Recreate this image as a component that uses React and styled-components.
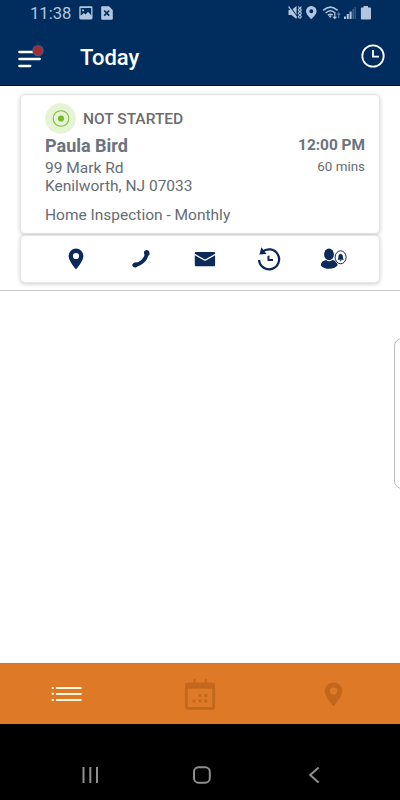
import React from 'react';
import styled, { createGlobalStyle } from 'styled-components';

const Global = createGlobalStyle`
  * { box-sizing: border-box; }
  body { margin: 0; background: #fff; font-family: Roboto, "Liberation Sans", sans-serif; }
  svg { display: block; flex: none; }
`;

const Screen = styled.div`
  position: relative;
  display: flex;
  flex-direction: column;
  width: 400px;
  height: 800px;
  overflow: hidden;
  background: #fff;
`;

const TopArea = styled.header`
  height: 86px;
  flex: none;
  background: #002d5e;
  border-bottom: 1px solid #00093f;
`;

const StatusBar = styled.div`
  display: flex;
  align-items: center;
  height: 26px;
  padding: 0 28px 0 30px;
  color: #b4c6df;
`;

const StatusTime = styled.span`
  width: 49px;
  padding-top: 1px;
  font-size: 16.6px;
  line-height: 26px;
  white-space: nowrap;
`;

const Notifications = styled.div`
  display: flex;
  flex: 1;
  gap: 8px;
`;

const AppBar = styled.div`
  display: flex;
  align-items: center;
  height: 60px;
  padding: 0 15px 0 18px;
`;

const Title = styled.h1`
  flex: 1;
  margin: 4px 0 0 36px;
  color: #fff;
  font-size: 22px;
  font-weight: 500;
  line-height: 28px;
`;

const Content = styled.main`
  flex: none;
  height: 205px;
  padding: 8px 20px 0;
  border-bottom: 1px solid #c9c9c9;
`;

const Card = styled.section`
  height: ${(p) => p.$height}px;
  margin-bottom: 1px;
  border: 1px solid #e6e6e6;
  border-radius: 5px;
  background: #fff;
  box-shadow: 0 1px 4px rgba(0, 0, 0, 0.2);
`;

const Details = styled(Card)`
  display: flex;
  flex-direction: column;
  padding: 8px 14px 0 24px;
`;

const Status = styled.div`
  display: flex;
  align-items: center;
  gap: 7px;
  height: 31px;
  color: #6c6c6c;
  font-size: 15.5px;
  font-weight: 500;
`;

const Row = styled.div`
  display: flex;
  justify-content: space-between;
  height: ${(p) => p.$height}px;
  line-height: ${(p) => p.$height}px;
  white-space: nowrap;
`;

const Name = styled.strong`
  color: #6b737e;
  font-size: 18px;
  font-weight: 700;
`;

const Time = styled.strong`
  color: #6b737e;
  font-size: 15.4px;
  font-weight: 700;
  line-height: 22px;
`;

const Text = styled.span`
  color: #666c73;
  font-size: 15.5px;
`;

const Duration = styled.span`
  color: #666c73;
  font-size: 13.4px;
  line-height: 18px;
`;

const Service = styled(Row)`
  margin-top: 10px;
`;

const Actions = styled(Card)`
  display: grid;
  grid-template-columns: repeat(5, 64.4px);
  justify-content: center;
  align-items: center;
  padding-left: 10px;
`;

const Action = styled.button`
  display: flex;
  justify-content: center;
  padding: 0;
  border: 0;
  background: none;
  color: #0a2a5c;
`;

const EdgePanel = styled.div`
  position: absolute;
  top: 338px;
  right: -12px;
  width: 18px;
  height: 151px;
  border: 1px solid #bdbdbd;
  border-radius: 8px;
`;

const TabBar = styled.nav`
  display: grid;
  grid-template-columns: repeat(3, 1fr);
  align-items: center;
  justify-items: center;
  height: 61px;
  flex: none;
  margin-top: auto;
  border-top: 1px solid #c77c33;
  background: #de7a27;
  color: #c1681c;
`;

const SystemNav = styled.nav`
  display: flex;
  align-items: center;
  gap: 95px;
  height: 76px;
  flex: none;
  padding: 26px 0 0 81px;
  background: #000;
  color: #8f8f8f;
`;

const PictureIcon = () => (
  <svg width="14" height="14" viewBox="0 0 14 14">
    <rect x=".3" y=".3" width="13.2" height="13.2" rx="1.4" fill="currentColor" />
    <path d="M1.7 2h10.5v7.2L9 5.8 6.7 8.5 4.8 6.9 1.7 9.8z" fill="#002d5e" />
    <circle cx="4" cy="4.3" r="1.1" fill="currentColor" />
  </svg>
);

const FileIcon = () => (
  <svg width="12" height="14" viewBox="0 0 12 14">
    <path d="M1.4.3H8l3.8 4v8.2q0 1.2-1.2 1.2H1.4Q.2 13.7.2 12.5v-11Q.2.3 1.4.3z" fill="currentColor" />
    <path d="M3.2 4.5l5 5.2m0-5.2l-5 5.2" stroke="#002d5e" strokeWidth="1.7" />
  </svg>
);

const StatusIcons = () => (
  <svg width="86" height="16" viewBox="286 5 86 16" fill="currentColor">
    <path d="M288.5 10h3l5-4v13l-5-4h-3z" />
    <path d="M289.6 6l8.4 11.5" stroke="#002d5e" strokeWidth="1.1" />
    <path d="M288.6 6.7l8 11" stroke="currentColor" strokeWidth="1.3" />
    <path d="M298.3 6.5l1.3 1.7-1.3 1.7 1.3 1.7-1.3 1.7 1.3 1.7-1.3 1.7 1.3 1.7M301.3 6.5l-1 1.7 1 1.7-1 1.7 1 1.7-1 1.7 1 1.7-1 1.7" fill="none" stroke="currentColor" strokeWidth="1.1" />
    <path fillRule="evenodd" d="M311.3 6a5.3 5.3 0 0 0-5.3 5.3c0 3.3 5.3 7.9 5.3 7.9s5.3-4.6 5.3-7.9A5.3 5.3 0 0 0 311.3 6zm0 3.2a2 2 0 1 1 0 4 2 2 0 0 1 0-4z" />
    <g fill="none" stroke="currentColor" strokeWidth="1.6">
      <path d="M323.2 10.4q7.2-6.7 14.4 0M325.6 13q4.8-4.5 9.6 0M328 15.4q2.4-2.2 4.6-.2" />
    </g>
    <path d="M328.8 16.2l1.4-1 1.4 1-1.4 1.7zM334.2 12.8v4h-1.8l2.4 2.4 2.4-2.4h-1.8v-4z" />
    <path opacity=".5" d="M338.7 12l2.2 2.7h-1.6V18h-1.2v-3.3h-1.6z" />
    <path d="M344 16.5h2V19h-2zM346.8 14h2v5h-2zM349.6 11.5h2V19h-2z" />
    <path opacity=".35" d="M352.4 9h1.6v10h-1.6zM354.6 7h1.2v12h-1.2z" />
    <path d="M363.5 6h4.5v1.5h2.2q.8 0 .8.8v10.2q0 .9-.9.9h-8.3q-.9 0-.9-.9V8.3q0-.8.8-.8h1.8z" />
  </svg>
);

const MenuIcon = () => (
  <svg width="26" height="26" viewBox="18 44 26 26">
    <path d="M19.3 53h14M19.3 60h20.5M19.3 67h11" stroke="#fff" strokeWidth="2.3" strokeLinecap="round" />
    <circle cx="38" cy="51.6" r="5.1" fill="#a62b31" stroke="#47577f" strokeWidth="1.2" />
  </svg>
);

const ClockIcon = () => (
  <svg width="24" height="24" viewBox="0 0 24 24" fill="none" stroke="#fff" strokeWidth="1.8">
    <circle cx="12" cy="12" r="10.7" />
    <path d="M12 6v6.7h6" />
  </svg>
);

const TargetIcon = () => (
  <svg width="31" height="31" viewBox="0 0 31 31">
    <circle cx="15.5" cy="15.5" r="15.3" fill="#e6f3d5" />
    <circle cx="16" cy="15.5" r="7.8" fill="none" stroke="#83bd3b" strokeWidth="1.1" />
    <circle cx="16" cy="15.5" r="3.1" fill="#78ba2d" />
  </svg>
);

const PinIcon = ({ width, height }) => (
  <svg width={width} height={height} viewBox="0 0 16 22" preserveAspectRatio="none">
    <path fill="currentColor" fillRule="evenodd" d="M8 .5A7.4 7.4 0 0 0 .6 7.9C.6 13.3 8 21.3 8 21.3s7.4-8 7.4-13.4A7.4 7.4 0 0 0 8 .5zm0 4.4a3.1 3.1 0 1 1 0 6.2 3.1 3.1 0 0 1 0-6.2z" />
  </svg>
);

const PhoneIcon = () => (
  <svg width="20" height="20" viewBox="0 0 20 20">
    <path d="M3.5 15.6C9.3 16 15.3 10.7 15.8 4.2" fill="none" stroke="currentColor" strokeWidth="3.7" />
    <path d="M1.2 15.7q1.5-2.8 4.2-2l1.8 1.4q.2 2.8-2.8 3.3-3 .2-3.2-2.7zM13.3 2.3q2-2.1 4.3-.5 1.5 1.5.8 4l-1.8 1.5-3.2-1.8q-.8-1.7-.1-3.2z" fill="currentColor" />
  </svg>
);

const MailIcon = () => (
  <svg width="22" height="16" viewBox="0 0 22 16">
    <rect x=".8" y="1" width="20.3" height="14.2" rx="1" fill="currentColor" />
    <path d="M.6 3.4L11 9.3l10.4-5.9" fill="none" stroke="#fff" strokeWidth="1.3" />
  </svg>
);

const HistoryIcon = () => (
  <svg width="24" height="24" viewBox="0 0 24 24">
    <path d="M5.4 4.9A10 10 0 1 1 2.1 13" fill="none" stroke="currentColor" strokeWidth="2.3" />
    <path d="M4.4.3L2.4 7.5 9.5 7z" fill="currentColor" />
    <path d="M11.5 8.8v4.3H16" fill="none" stroke="currentColor" strokeWidth="2" />
  </svg>
);

const CustomerIcon = () => (
  <svg width="27" height="22" viewBox="0 0 27 22">
    <ellipse cx="9" cy="6.4" rx="4.9" ry="5.8" fill="currentColor" />
    <path d="M.8 17.7q0-5 5.4-5.8Q9 14.5 12.3 12q5.3.8 5.3 5.2-2.8 3.6-8.3 3.6T.8 17.7z" fill="currentColor" />
    <ellipse cx="20.6" cy="9.3" rx="6.4" ry="7.3" fill="#fff" />
    <ellipse cx="20.6" cy="9.3" rx="5.5" ry="6.5" fill="none" stroke="currentColor" strokeWidth="1" />
    <path d="M17.3 11.7q1.1-.7 1.1-3 .1-2.5 2.2-3 2.2.5 2.3 3 0 2.3 1.1 3zM19.5 12.3h2.2q-.4 1.1-1.1 1.1t-1.1-1.1z" fill="currentColor" />
  </svg>
);

const ListIcon = () => (
  <svg width="31" height="16" viewBox="0 0 31 16" stroke="#fff8dc" strokeWidth="2">
    <path d="M.8 2h2M.8 7.8h2M.8 14h2M5 2h25.5M5 8h25.5M5 14h25.5" />
  </svg>
);

const CalendarIcon = () => (
  <svg width="32" height="34" viewBox="0 0 32 34" fill="none" stroke="currentColor">
    <rect x="2.3" y="6.8" width="27.4" height="24.6" rx="2" strokeWidth="2.8" />
    <path d="M1.5 8.8h29" strokeWidth="5.6" />
    <path d="M10.5 2v5M21.8 2v5" strokeWidth="1.7" />
    <path d="M14.5 18.7h3M20.2 18.7h3M8.5 24h3M14.5 24h3M20.2 24h3" strokeWidth="2.8" />
  </svg>
);

const RecentsIcon = () => (
  <svg width="18" height="18" viewBox="0 0 18 18" stroke="currentColor" strokeWidth="2">
    <path d="M2.5 1v16M9.3 1v16M16 1v16" />
  </svg>
);

const HomeIcon = () => (
  <svg width="19" height="18" viewBox="0 0 19 18" fill="none" stroke="currentColor" strokeWidth="2">
    <rect x="1" y="1.3" width="15.8" height="15.4" rx="4.5" />
  </svg>
);

const BackIcon = () => (
  <svg width="12" height="18" viewBox="0 0 12 18" fill="none" stroke="currentColor" strokeWidth="2">
    <path d="M10.6 1.5L2.2 9l8.4 7.5" />
  </svg>
);

const HomeButton = styled.span`
  margin-left: -1px;
  margin-right: 1px;
`;

export default function App() {
  return (
    <>
      <Global />
      <Screen>
        <TopArea>
          <StatusBar>
            <StatusTime>11:38</StatusTime>
            <Notifications>
              <PictureIcon />
              <FileIcon />
            </Notifications>
            <StatusIcons />
          </StatusBar>
          <AppBar>
            <MenuIcon />
            <Title>Today</Title>
            <ClockIcon />
          </AppBar>
        </TopArea>
        <Content>
          <Details $height={140}>
            <Status><TargetIcon />NOT STARTED</Status>
            <Row $height={24}><Name>Paula Bird</Name><Time>12:00 PM</Time></Row>
            <Row $height={20}><Text>99 Mark Rd</Text><Duration>60 mins</Duration></Row>
            <Row $height={17}><Text>Kenilworth, NJ 07033</Text></Row>
            <Service $height={20}><Text>Home Inspection - Monthly</Text></Service>
          </Details>
          <Actions $height={48}>
            <Action aria-label="Location"><PinIcon width={16} height={22} /></Action>
            <Action aria-label="Call"><PhoneIcon /></Action>
            <Action aria-label="Email"><MailIcon /></Action>
            <Action aria-label="History"><HistoryIcon /></Action>
            <Action aria-label="Customer alerts"><CustomerIcon /></Action>
          </Actions>
        </Content>
        <EdgePanel />
        <TabBar>
          <ListIcon />
          <CalendarIcon />
          <PinIcon width={19} height={25} />
        </TabBar>
        <SystemNav>
          <RecentsIcon />
          <HomeButton><HomeIcon /></HomeButton>
          <BackIcon />
        </SystemNav>
      </Screen>
    </>
  );
}
